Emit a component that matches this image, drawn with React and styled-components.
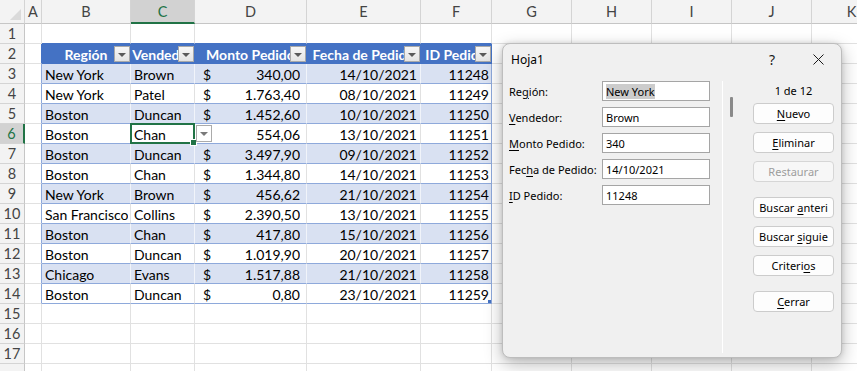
import React from "react";
import styled, { createGlobalStyle, css } from "styled-components";

const Global = createGlobalStyle`
  html, body { margin: 0; padding: 0; background: #fff; }
  #root { width: 857px; height: 371px; }
`;

const Page = styled.div`
  position: relative;
  width: 857px;
  height: 371px;
  overflow: hidden;
  background: #fff;
`;

const Sheet = styled.div`
  display: grid;
  grid-template-columns: 25px 17px 89px 64px 112px 114px 71px 80px 80px 80px 80px 80px;
  grid-template-rows: 24px;
  grid-auto-rows: 20px;
  font-family: "Lato", "Liberation Sans", sans-serif;
  font-size: 14px;
  color: #000;
`;

const headerBase = css`
  box-sizing: border-box;
  background: #f3f3f3;
  color: #444;
  display: flex;
  align-items: center;
  justify-content: center;
  border-right: 1px solid #d4d4d4;
  border-bottom: 1px solid #d4d4d4;
`;

const Corner = styled.div`
  ${headerBase};
  position: relative;
  border-bottom-color: #c6c6c6;
  &::after {
    content: "";
    position: absolute;
    right: 3px;
    bottom: 3px;
    width: 0;
    height: 0;
    border-left: 11px solid transparent;
    border-bottom: 11px solid #dadada;
  }
`;

const ColHeader = styled.div`
  ${headerBase};
  font-size: 14.5px;
  border-bottom-color: #c6c6c6;
  ${(p) =>
    p.$selected &&
    css`
      background: #d2d2d2;
      color: #217346;
      border-bottom: 2px solid #217346;
    `}
`;

const RowHeader = styled.div`
  ${headerBase};
  font-size: 14.5px;
  border-right-color: #c6c6c6;
  ${(p) =>
    p.$selected &&
    css`
      background: #d2d2d2;
      color: #217346;
      border-right: 2px solid #217346;
    `}
`;

const toneBg = { none: "#fff", head: "#4472C4", band: "#D9E1F2", white: "#fff" };

const Cell = styled.div`
  box-sizing: border-box;
  position: relative;
  min-width: 0;
  display: flex;
  align-items: center;
  padding: 1px ${(p) => p.$padR ?? 3}px 0 ${(p) => p.$padL ?? 3}px;
  background: ${(p) => toneBg[p.$tone]};
  border-right: 1px solid ${(p) => p.$right};
  border-bottom: 1px solid ${(p) => p.$bottom};
  color: ${(p) => (p.$tone === "head" ? "#fff" : "#000")};
  font-weight: ${(p) => (p.$tone === "head" ? 700 : 400)};
  white-space: nowrap;
  z-index: ${(p) => (p.$raised ? 3 : "auto")};
`;

const CellText = styled.span`
  display: block;
  width: 100%;
  overflow: hidden;
  text-align: ${(p) => p.$align || "left"};
`;

const Money = styled.span`
  display: flex;
  width: 100%;
  justify-content: space-between;
  overflow: hidden;
`;

const FilterButton = styled.span`
  position: absolute;
  right: 0;
  top: 2px;
  width: 16px;
  height: 16px;
  box-sizing: border-box;
  border: 1px solid #a9a9a9;
  background: ${(p) => (p.$white ? "#fff" : "linear-gradient(#f7f7f7, #e4e4e4)")};
  display: flex;
  align-items: center;
  justify-content: center;
  &::after {
    content: "";
    width: 0;
    height: 0;
    border-left: 4px solid transparent;
    border-right: 4px solid transparent;
    border-top: 4px solid #5a5a5a;
    margin-top: 1px;
  }
`;

const DropButton = styled(FilterButton)`
  right: -18px;
  top: 1px;
  height: 17px;
  border-color: #ababab;
  &::after {
    border-top-color: #7a7a7a;
  }
`;

const Selection = styled.span`
  position: absolute;
  left: -1px;
  top: -1px;
  right: -1px;
  bottom: -1px;
  border: 2px solid #217346;
  pointer-events: none;
  &::after {
    content: "";
    position: absolute;
    right: -4px;
    bottom: -4px;
    width: 5px;
    height: 5px;
    background: #217346;
    border: 1px solid #fff;
  }
`;

const ResizeMark = styled.span`
  position: absolute;
  right: 0;
  bottom: 0;
  width: 3px;
  height: 3px;
  background: #4472C4;
`;

/* ---------- Dialog ---------- */

const Dialog = styled.div`
  position: absolute;
  left: 502px;
  top: 43px;
  width: 340px;
  height: 315px;
  box-sizing: border-box;
  background: #f0f0f0;
  border: 1px solid #bdbdbd;
  border-radius: 8px;
  box-shadow: 0 6px 18px rgba(0, 0, 0, 0.28), 0 0 5px rgba(0, 0, 0, 0.12);
  display: flex;
  flex-direction: column;
  font-family: "Noto Sans", "Open Sans", sans-serif;
  font-size: 11px;
  color: #000;
  z-index: 10;
`;

const TitleBar = styled.div`
  height: 31px;
  display: flex;
  align-items: center;
  padding-left: 8px;
`;

const Title = styled.span`
  flex: 1;
  font-size: 12px;
`;

const TitleButton = styled.span`
  width: 46px;
  height: 31px;
  display: flex;
  align-items: center;
  justify-content: center;
  font-size: 14px;
  color: #1a1a1a;
`;

const Body = styled.div`
  flex: 1;
  display: flex;
  padding: 6px 0 4px;
`;

const LeftPane = styled.div`
  width: 219px;
  box-sizing: border-box;
  padding-left: 6px;
  display: flex;
  flex-direction: column;
  gap: 6px;
`;

const FieldRow = styled.div`
  display: flex;
  align-items: center;
  height: 20px;
`;

const Label = styled.span`
  width: 93px;
  white-space: nowrap;
`;

const Input = styled.div`
  width: 108px;
  height: 20px;
  box-sizing: border-box;
  border: 1px solid #a5a5a5;
  background: #fff;
  display: flex;
  align-items: center;
  padding-left: 3px;
  white-space: nowrap;
`;

const Highlight = styled.span`
  background: #cccccc;
`;

const Key = styled.u`
  text-underline-offset: 2px;
  text-decoration-thickness: 1px;
`;

const Separator = styled.div`
  width: 1px;
  background: #ffffff;
`;

const RightPane = styled.div`
  flex: 1;
  display: flex;
`;

const ScrollTrack = styled.div`
  width: 30px;
  box-sizing: border-box;
  padding: 16px 0 0 7px;
`;

const Thumb = styled.div`
  width: 3px;
  height: 20px;
  background: #8a8a8a;
  border-radius: 1px;
`;

const ButtonColumn = styled.div`
  width: 81px;
  display: flex;
  flex-direction: column;
`;

const Counter = styled.div`
  height: 18px;
  display: flex;
  align-items: center;
  justify-content: center;
`;

const DlgButton = styled.div`
  height: 21px;
  box-sizing: border-box;
  margin-top: ${(p) => p.$gap}px;
  border: 1px solid ${(p) => (p.$disabled ? "#d6d6d6" : "#cccccc")};
  border-radius: 4px;
  background: ${(p) => (p.$disabled ? "#f7f7f7" : "#fdfdfd")};
  color: ${(p) => (p.$disabled ? "#9d9d9d" : "#000")};
  display: flex;
  align-items: center;
  justify-content: center;
  white-space: nowrap;
  overflow: hidden;
`;

const ButtonLabel = styled.span`
  white-space: pre;
`;

/* ---------- Data ---------- */

const COLS = ["A", "B", "C", "D", "E", "F", "G", "H", "I", "J", "K"];
const HEADERS = ["Región", "Vendedor", "Monto Pedido", "Fecha de Pedido", "ID Pedido"];
const DATA = [
  ["New York", "Brown", "340,00", "14/10/2021", "11248"],
  ["New York", "Patel", "1.763,40", "08/10/2021", "11249"],
  ["Boston", "Duncan", "1.452,60", "10/10/2021", "11250"],
  ["Boston", "Chan", "554,06", "13/10/2021", "11251"],
  ["Boston", "Duncan", "3.497,90", "09/10/2021", "11252"],
  ["Boston", "Chan", "1.344,80", "14/10/2021", "11253"],
  ["New York", "Brown", "456,62", "21/10/2021", "11254"],
  ["San Francisco", "Collins", "2.390,50", "13/10/2021", "11255"],
  ["Boston", "Chan", "417,80", "15/10/2021", "11256"],
  ["Boston", "Duncan", "1.019,90", "20/10/2021", "11257"],
  ["Chicago", "Evans", "1.517,88", "21/10/2021", "11258"],
  ["Boston", "Duncan", "0,80", "23/10/2021", "11259"],
];

const GRID = "#e1e1e1";
const HEAD = "#4472C4";
const LINE = "#8EA9DB";

function renderCell(r, ci) {
  const key = `${r}-${ci}`;
  const inTable = r >= 2 && r <= 14 && ci >= 1 && ci <= 5;
  let tone = "none";
  let right = GRID;
  let bottom = GRID;
  if (inTable) {
    tone = r === 2 ? "head" : r % 2 === 1 ? "band" : "white";
    bottom = r === 2 ? HEAD : LINE;
    right = r === 2 ? HEAD : tone === "band" ? "#f1f4fa" : GRID;
    if (ci === 5) right = r === 2 ? HEAD : LINE;
  }
  if (ci === 0 && r >= 2 && r <= 14) right = r === 2 ? HEAD : LINE;
  if (r === 1 && ci >= 1 && ci <= 5) bottom = HEAD;

  if (!inTable) {
    return <Cell key={key} $tone={tone} $right={right} $bottom={bottom} />;
  }

  if (r === 2) {
    return (
      <Cell key={key} $tone={tone} $right={right} $bottom={bottom} $padL={1} $padR={1}>
        <CellText $align="center">{HEADERS[ci - 1]}</CellText>
        <FilterButton />
      </Cell>
    );
  }

  const row = DATA[r - 3];
  const value = row[ci - 1];
  const selected = r === 6 && ci === 2;

  if (ci === 3) {
    return (
      <Cell key={key} $tone={tone} $right={right} $bottom={bottom} $padL={8} $padR={6}>
        <Money>
          <span>$</span>
          <span>{value}</span>
        </Money>
      </Cell>
    );
  }

  const align = ci >= 4 ? "right" : "left";
  return (
    <Cell
      key={key}
      $tone={tone}
      $right={right}
      $bottom={bottom}
      $padL={3}
      $padR={ci === 4 ? 3 : 2}
      $raised={selected}
    >
      <CellText $align={align}>{value}</CellText>
      {selected && (
        <>
          <Selection />
          <DropButton $white />
        </>
      )}
      {r === 14 && ci === 5 && <ResizeMark />}
    </Cell>
  );
}

function Spreadsheet() {
  const cells = [<Corner key="corner" />];
  COLS.forEach((c) =>
    cells.push(
      <ColHeader key={`h-${c}`} $selected={c === "C"}>
        {c}
      </ColHeader>
    )
  );
  for (let r = 1; r <= 18; r++) {
    cells.push(
      <RowHeader key={`r-${r}`} $selected={r === 6}>
        {r <= 17 ? r : ""}
      </RowHeader>
    );
    COLS.forEach((_, ci) => cells.push(renderCell(r, ci)));
  }
  return <Sheet>{cells}</Sheet>;
}

function CloseIcon() {
  return (
    <svg width="11" height="11" viewBox="0 0 11 11">
      <path d="M0.5 0.5 L10.5 10.5 M10.5 0.5 L0.5 10.5" stroke="#1a1a1a" strokeWidth="1" fill="none" />
    </svg>
  );
}

const FIELDS = [
  { pre: "Re", key: "g", post: "ión:", value: "New York", hl: true },
  { pre: "", key: "V", post: "endedor:", value: "Brown" },
  { pre: "", key: "M", post: "onto Pedido:", value: "340" },
  { pre: "Fec", key: "h", post: "a de Pedido:", value: "14/10/2021" },
  { pre: "", key: "I", post: "D Pedido:", value: "11248" },
];

const BUTTONS = [
  { pre: "", key: "N", post: "uevo", gap: 4 },
  { pre: "", key: "E", post: "liminar", gap: 8 },
  { pre: "Restaurar", key: "", post: "", gap: 8, disabled: true },
  { pre: "Buscar ", key: "a", post: "nteri", gap: 15 },
  { pre: "Buscar ", key: "s", post: "iguie", gap: 8 },
  { pre: "Criteri", key: "o", post: "s", gap: 8 },
  { pre: "", key: "C", post: "errar", gap: 15 },
];

function DataForm() {
  return (
    <Dialog>
      <TitleBar>
        <Title>Hoja1</Title>
        <TitleButton>?</TitleButton>
        <TitleButton>
          <CloseIcon />
        </TitleButton>
      </TitleBar>
      <Body>
        <LeftPane>
          {FIELDS.map((f) => (
            <FieldRow key={f.post}>
              <Label>
                {f.pre}
                <Key>{f.key}</Key>
                {f.post}
              </Label>
              <Input>{f.hl ? <Highlight>{f.value}</Highlight> : f.value}</Input>
            </FieldRow>
          ))}
        </LeftPane>
        <Separator />
        <RightPane>
          <ScrollTrack>
            <Thumb />
          </ScrollTrack>
          <ButtonColumn>
            <Counter>1 de 12</Counter>
            {BUTTONS.map((b) => (
              <DlgButton key={b.pre + b.key + b.post} $gap={b.gap} $disabled={b.disabled}>
                <ButtonLabel>
                  {b.pre}
                  {b.key && <Key>{b.key}</Key>}
                  {b.post}
                </ButtonLabel>
              </DlgButton>
            ))}
          </ButtonColumn>
        </RightPane>
      </Body>
    </Dialog>
  );
}

export default function App() {
  return (
    <Page>
      <Global />
      <Spreadsheet />
      <DataForm />
    </Page>
  );
}
